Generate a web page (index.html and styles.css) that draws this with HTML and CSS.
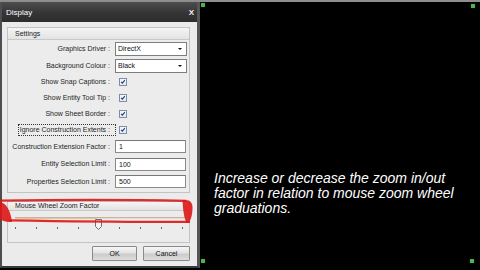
FILE: index.html
```html
<!DOCTYPE html>
<html>
<head>
<meta charset="utf-8">
<link rel="stylesheet" href="styles.css">
</head>
<body>
<div class="topline"></div>
<div class="screen">
  <div class="dialog">
    <div class="titlebar"><span class="title">Display</span><span class="close">X</span></div>
    <div class="dbody">
      <div class="group settings">
        <div class="ghead">Settings</div>
        <div class="rows">
          <div class="row r-sel"><span class="lbl">Graphics Driver :</span><div class="select"><span>DirectX</span><i class="arrow"></i></div></div>
          <div class="row r-sel"><span class="lbl">Background Colour :</span><div class="select"><span>Black</span><i class="arrow"></i></div></div>
          <div class="row r-chk"><span class="lbl">Show Snap Captions :</span><span class="chk"><svg viewBox="0 0 8 8"><path d="M1.6 3.8 L3.2 5.6 L6.4 1.6" /></svg></span></div>
          <div class="row r-chk"><span class="lbl">Show Entity Tool Tip :</span><span class="chk"><svg viewBox="0 0 8 8"><path d="M1.6 3.8 L3.2 5.6 L6.4 1.6" /></svg></span></div>
          <div class="row r-chk"><span class="lbl">Show Sheet Border :</span><span class="chk"><svg viewBox="0 0 8 8"><path d="M1.6 3.8 L3.2 5.6 L6.4 1.6" /></svg></span></div>
          <div class="row r-chk"><span class="lbl"><span class="focus">Ignore Construction Extents :</span></span><span class="chk"><svg viewBox="0 0 8 8"><path d="M1.6 3.8 L3.2 5.6 L6.4 1.6" /></svg></span></div>
          <div class="row r-inp"><span class="lbl">Construction Extension Factor :</span><div class="input">1</div></div>
          <div class="row r-inp"><span class="lbl">Entity Selection Limit :</span><div class="input">100</div></div>
          <div class="row r-inp"><span class="lbl">Properties Selection Limit :</span><div class="input">500</div></div>
        </div>
      </div>
      <div class="group zoomgrp">
        <div class="ghead small">Mouse Wheel Zoom Factor</div>
        <div class="slider">
          <div class="track"><div class="fill"></div></div>
          <div class="ticks"><i></i><i></i><i></i><i></i><i></i><i></i><i></i><i></i><i></i></div>
          <svg class="thumb" viewBox="0 0 7 11"><path d="M0.5 0.5 H6.5 V7.5 L3.5 10.5 L0.5 7.5 Z" /></svg>
        </div>
      </div>
      <div class="buttons">
        <div class="btn ok">OK</div>
        <div class="btn cancel">Cancel</div>
      </div>
    </div>
  </div>
  <div class="canvas">
    <p class="note">Increase or decrease the zoom in/out<br>factor in relation to mouse zoom wheel<br>graduations.</p>
    <i class="dot d1"></i><i class="dot d2"></i><i class="dot d3"></i><i class="dot d4"></i>
  </div>
</div>
<svg class="markup" viewBox="0 0 200 270" width="200" height="270">
  <path class="ln" d="M0 200.6 C60 199.6 130 199.6 186 200.8" />
  <path class="ln" d="M9 220.4 C70 221.4 130 222.2 190 221.8" />
  <path class="blob" d="M0 202 C6 203 10.5 210 12 222 C7 222.5 2.5 221 0 219 Z" />
  <path class="blob" d="M182.5 200.5 C189 199 193 202 192.5 209 C192 216 191 221.5 187 223 C184 219 183 210 182.5 200.5 Z" />
</svg>
</body>
</html>
```

FILE: styles.css
```css
* { box-sizing: border-box; margin: 0; padding: 0; }
html, body { width: 480px; height: 270px; }
body {
  background: #000;
  position: relative;
  overflow: hidden;
  font-family: "Liberation Sans", Arial, sans-serif;
}
.topline { height: 2px; background: #8e8e8e; }
.screen { display: flex; height: 268px; }

.dialog {
  width: 200px;
  height: 266px;
  flex: none;
  display: flex;
  flex-direction: column;
  border-left: 2px solid #4e4e4e;
  border-right: 3px solid #555;
  border-bottom: 2px solid #3a3a3a;
  background: #ebebeb;
}
.titlebar {
  height: 20px;
  flex: none;
  display: flex;
  align-items: center;
  justify-content: space-between;
  padding: 0 3px 0 4px;
  background: linear-gradient(#4d4d4d, #333 60%, #2e2e2e);
  color: #fff;
}
.title { font-size: 8px; }
.close { font-size: 8px; font-weight: bold; color: #eee; }

.dbody {
  flex: 1;
  display: flex;
  flex-direction: column;
  padding: 5px 7px 5px 5px;
}
.group {
  border: 1px solid #c3c3c3;
  background: #ececec;
  flex: none;
}
.settings { height: 166px; }
.ghead {
  height: 12px;
  border-bottom: 1px solid #c9c9c9;
  background: linear-gradient(#f5f5f5, #e3e3e3);
  font-size: 7px;
  line-height: 11px;
  padding-left: 7px;
  color: #222;
}
.ghead.small { height: 9px; line-height: 8px; }

.rows { display: flex; flex-direction: column; }
.row { display: flex; align-items: center; font-size: 7px; color: #1e1e1e; }
.r-sel { height: 17px; }
.r-chk { height: 16px; }
.r-inp { height: 17.5px; }
.lbl {
  width: 102px;
  margin-right: 5px;
  text-align: right;
  white-space: nowrap;
  line-height: 10px;
}
.focus {
  display: inline-block;
  border: 1px dotted #333;
  padding: 0 5px 0 1px;
  margin-right: -6px;
}
.select {
  width: 72px;
  height: 14px;
  background: #fff;
  border: 1px solid #7d7d7d;
  display: flex;
  align-items: center;
  justify-content: space-between;
  padding: 0 4px 0 2px;
  color: #111;
}
.arrow {
  width: 0; height: 0;
  border-left: 2px solid transparent;
  border-right: 2px solid transparent;
  border-top: 2px solid #111;
}
.chk {
  width: 8px;
  height: 8px;
  margin-left: 4px;
  border: 1px solid #7c8ea8;
  background: linear-gradient(#f6f8fb, #e4e9f0);
  display: flex;
}
.chk svg { width: 6px; height: 6px; }
.chk path { fill: none; stroke: #233b78; stroke-width: 1.4; }
.input {
  width: 71px;
  height: 13px;
  background: #fff;
  border: 1px solid #8a8a8a;
  border-top-color: #777;
  padding-left: 3px;
  line-height: 11px;
  color: #111;
}

.zoomgrp { margin-top: 8px; height: 42px; }
.slider { position: relative; height: 31px; }
.track {
  margin: 6px 4px 0 7px;
  height: 2px;
  background: #e2ddd6;
  border-top: 1px solid #c8b49a;
  display: flex;
}
.fill { width: 82px; background: #e9c497; }
.ticks {
  margin: 8px 6px 0 7px;
  display: flex;
  justify-content: space-between;
}
.ticks i { display: block; width: 1px; height: 2px; background: #666; }
.thumb {
  position: absolute;
  left: 87px;
  top: 2px;
  width: 7px;
  height: 11px;
}
.thumb path { fill: #f4f4f4; stroke: #6e6e6e; stroke-width: 1; }

.buttons {
  margin-top: 3px;
  display: flex;
  justify-content: flex-end;
  gap: 6px;
}
.btn {
  height: 15px;
  border: 1px solid #8a8a8a;
  border-radius: 1px;
  background: linear-gradient(#f6f6f6, #e3e3e3 45%, #cbcbcb 55%, #dedede);
  font-size: 7px;
  line-height: 13px;
  text-align: center;
  color: #111;
}
.ok { width: 45px; }
.cancel { width: 47px; }

.canvas {
  flex: 1;
  position: relative;
  padding: 169px 0 0 14px;
}
.note {
  color: #fff;
  font-style: italic;
  font-size: 14px;
  line-height: 15px;
  white-space: nowrap;
}
.dot {
  position: absolute;
  width: 4px;
  height: 4px;
  background: #4fb24f;
  box-shadow: 0 0 1px #2a7a2a;
}
.d1 { left: 1px; top: 1px; }
.d2 { left: 271px; top: 2px; }
.d3 { left: 1px; top: 257px; }
.d4 { left: 270px; top: 257px; }

.markup {
  position: absolute;
  left: 0;
  top: 0;
  pointer-events: none;
}
.markup .ln { fill: none; stroke: rgba(222, 22, 22, 0.9); stroke-width: 2.3; }
.markup .blob { fill: rgba(222, 22, 22, 0.9); }
```
